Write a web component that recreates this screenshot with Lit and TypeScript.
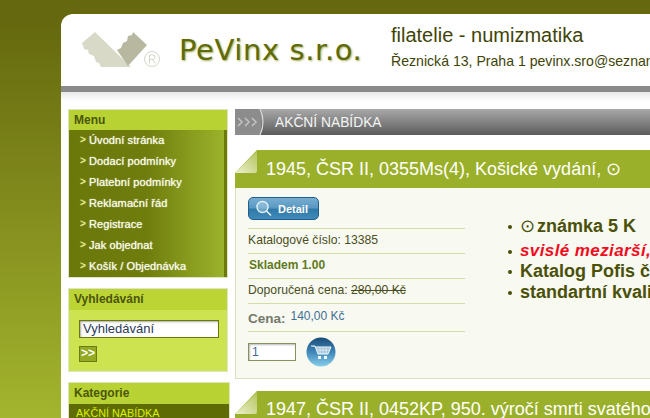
import { LitElement, html, css } from "lit";
import { customElement } from "lit/decorators.js";

const menu = ["Úvodní stránka", "Dodací podmínky", "Platební podmínky", "Reklamační řád", "Registrace", "Jak objednat", "Košík / Objednávka"];

@customElement("app-root")
export class AppRoot extends LitElement {
  static styles = css`
    :host { display: block; width: 650px; height: 418px; overflow: hidden; font-family: "Liberation Sans", Arial, sans-serif;
      background: linear-gradient(#65680e 0, #65680e 20px, #a3b52e 418px); }
    .page { margin-left: 61px; padding-top: 14px; width: 589px; overflow: hidden; box-sizing: border-box; height: 418px; }
    .wrap { background: #fff; border-top-left-radius: 12px; height: 404px; overflow: hidden; }
    .head { height: 72px; display: flex; white-space: nowrap; }
    .logo { width: 108px; height: 72px; margin-left: 14px; flex: none; }
    .brand { width: 212px; flex: none; margin-left: -4px; font: 29px/72px "DejaVu Sans", sans-serif; color: #5f6b0b; letter-spacing: .6px; text-shadow: 1px 1px 2px #a8b060; }
    .info { padding-top: 9px; color: #3f4406; }
    .info .a { font-size: 20px; line-height: 25px; }
    .info .b { font-size: 14.1px; line-height: 18px; margin-top: 4px; }
    .rule { height: 6px; background: #8a8a8a; }
    .fade { height: 9px; background: linear-gradient(#e8e8e8, #fff); }
    .cols { display: flex; margin-top: 8px; padding-left: 7px; gap: 5px; align-items: flex-start; }
    .side { width: 162px; flex: none; display: flex; flex-direction: column; gap: 10px; }
    .box { border: 1px solid #dfe3c4; width: 158px; }
    .box h3 { margin: 0; height: 20px; background: #b9d233; color: #4a560a; font-size: 12px; line-height: 20px; font-weight: bold; padding-left: 5px; }
    .menu { background: linear-gradient(90deg, #6b780a 0, #6f7d0d 50%, #9bb32b 100%); border-right: 3px solid #6d7a0a; padding: 0; margin: 0; list-style: none; height: 147px; }
    .menu li { height: 21px; line-height: 20px; font-size: 11px; letter-spacing: .1px; color: #f6f9e4; text-shadow: 0 0 1px #f6f9e4; padding-left: 11px; display: flex; gap: 6px; white-space: nowrap; }
    .menu li span { color: #e4ee70; width: 3px; font-size: 10px; }
    .search { background: #cde350; border-color: #e0e4c8; }
    .search h3 { height: 21px; line-height: 21px; background: #bdd435; }
    .sbody { background: #cde350; padding: 10px 0 10px 10px; height: 41px; }
    .sbody .inp { box-sizing: border-box; width: 140px; height: 18px; border: 1px solid #6c780e; background: #fff; box-shadow: inset 1px 1px 2px #aaa; font-size: 13px; line-height: 16px; padding-left: 3px; color: #2b3a55; }
    .go { margin-top: 8px; width: 18px; height: 16px; box-sizing: border-box; border: 1px solid #6c7c12; background: #93aa22; color: #fff; font: bold 12px/13px "Liberation Sans", sans-serif; text-align: center; }
    .cat { width: 160px; }
    .cat h3 { height: 21px; line-height: 21px; background: #b9d233; }
    .cat .on { height: 20px; background: #5f6b05; color: #d8f000; font-size: 10.8px; line-height: 19px; padding-left: 7px; }
    .main { width: 450px; flex: none; }
    .title { height: 26px; display: flex; background: linear-gradient(#a9a9a9, #5c5c5c); width: 415px; align-items: center; color: #f4f4f4; font-size: 13.8px; }
    .title svg { flex: none; margin-right: 9px; }
    .prod { width: 460px; margin-top: 15px; }
    .phead { height: 38px; background: #9bb02a; display: flex; align-items: center; white-space: nowrap; color: #fff; font-size: 18px; position: relative; padding-left: 31px; padding-bottom: 1px; box-sizing: border-box; }
    .fold { position: absolute; left: 0; top: 0; }
    .pbody { height: 191px; box-sizing: border-box; background: #f8f9f0; border: 1px solid #dcdfc0; border-top: 0; display: flex; }
    .left { width: 217px; margin-left: 12px; flex: none; font-size: 12.2px; color: #4a4e22; }
    .detail { margin-top: 9px; width: 71px; height: 23px; box-sizing: border-box; border: 1px solid #1f5f8f; border-radius: 5px; background: linear-gradient(#78aed2 0, #5a99c2 45%, #2f7aa8 55%, #3f8ab8 100%); display: flex; align-items: center; gap: 5px; padding-left: 6px; color: #fff; font-size: 11px; font-weight: bold; }
    .row { border-top: 1px solid #d6dbaa; height: 24px; line-height: 23px; white-space: nowrap; }
    .row.first { margin-top: 8px; }
    .row.stock { color: #5f7a1c; font-weight: bold; font-size: 12px; padding-left: 1px; height: 24px; }
    .row s { color: #4a4e22; }
    .row.price { height: 27px; line-height: 27px; display: flex; gap: 5px; }
    .row.price b { color: #73796b; font-size: 13.5px; padding-top: 1px; }
    .row.price span { color: #3f6f96; font-size: 12px; line-height: 25px; }
    .buy { border-top: 1px solid #d6dbaa; display: flex; align-items: center; gap: 10px; padding-top: 5px; }
    .qty { width: 48px; height: 18px; box-sizing: border-box; border: 1px solid #8a8f5e; background: #fff; box-shadow: inset 1px 1px 2px #bbb; font-size: 12px; line-height: 16px; padding-left: 3px; color: #3a6a9a; }
    .list { margin: 28px 0 0 43px; padding: 0 0 0 12px; list-style: none; white-space: nowrap; font-size: 18px; font-weight: bold; color: #4a5008; line-height: 20.5px; }
    .list li { position: relative; }
    .list li::before { content: ""; position: absolute; left: -12px; top: 9px; width: 4px; height: 4px; border-radius: 50%; background: #4a5008; }
    .list .r { color: #f00c1e; font-style: italic; font-size: 17px; letter-spacing: .4px; margin-top: 4px; }
    .list .s { display: inline-block; font-weight: normal; margin-right: 2px; }
    .next { margin-top: 12px; }
  `;

  private fold() {
    return html`<svg class="fold" width="23" height="24" viewBox="0 0 23 24">
      <defs><linearGradient id="fg" x1="0" y1="1" x2="1" y2="0"><stop offset="0" stop-color="#eef0cf"/><stop offset="1" stop-color="#b3c55a"/></linearGradient></defs>
      <path d="M0 0H22L0 23Z" fill="#fff"/><path d="M0 23L22 1V21Q22 23 20 23Z" fill="url(#fg)"/></svg>`;
  }

  render() {
    return html`<div class="page"><div class="wrap">
      <div class="head">
        <svg class="logo" viewBox="0 0 108 72">
          <path d="M20 18L56 53H26L24 49L21 48L19 42L14 40L13 36L9 35L7 29Z" fill="#d8d9c7"/>
          <path d="M58 18L72 31L53 52L42 36L46 34L48 29L52 27L53 22L57 21Z" fill="#b8b8a0"/>
          <circle cx="77" cy="45" r="7.5" fill="none" stroke="#d6d6ca" stroke-width="1"/>
          <path d="M74.5 49.5V41H78Q80 41 80 43.2T78 45.4H74.5M77.5 45.4L80.5 49.5" fill="none" stroke="#d4d4c8" stroke-width="1"/>
        </svg>
        <div class="brand">PeVinx s.r.o.</div>
        <div class="info"><div class="a">filatelie - numizmatika</div><div class="b">Řeznická 13, Praha 1 pevinx.sro@seznam.cz</div></div>
      </div>
      <div class="rule"></div><div class="fade"></div>
      <div class="cols">
        <div class="side">
          <div class="box"><h3>Menu</h3><ul class="menu">${menu.map((m) => html`<li><span>&gt;</span>${m}</li>`)}</ul></div>
          <div class="box search"><h3>Vyhledávání</h3><div class="sbody"><div class="inp">Vyhledávání</div><div class="go">&gt;&gt;</div></div></div>
          <div class="box cat"><h3>Kategorie</h3><div class="on">AKČNÍ NABÍDKA</div></div>
        </div>
        <div class="main">
          <div class="title">
            <svg width="31" height="26" viewBox="0 0 31 26"><rect width="26" height="26" fill="#8c8c8c"/>
              <path d="M3 9L7 13L3 17M10 9L14 13L10 17M17 9L21 13L17 17" fill="none" stroke="#c4c4c4" stroke-width="1.5"/>
              <path d="M25 0Q31 13 25 26" fill="none" stroke="#d8d8d8" stroke-width="1.2"/></svg>
            AKČNÍ NABÍDKA
          </div>
          <div class="prod">
            <div class="phead">${this.fold()}1945, ČSR II, 0355Ms(4), Košické vydání, ⊙</div>
            <div class="pbody">
              <div class="left">
                <div class="detail">
                  <svg width="18" height="18" viewBox="0 0 18 18"><circle cx="7.5" cy="7" r="5.5" fill="#a9cfe6" fill-opacity=".5" stroke="#e4f0f8" stroke-width="1.4"/><path d="M11.5 11L16 15.5" stroke="#e8f2f8" stroke-width="1.6"/></svg>
                  Detail
                </div>
                <div class="row first">Katalogové číslo: 13385</div>
                <div class="row stock">Skladem 1.00</div>
                <div class="row">Doporučená cena: <s>280,00 Kč</s></div>
                <div class="row price"><b>Cena:</b><span>140,00 Kč</span></div>
                <div class="buy">
                  <div class="qty">1</div>
                  <svg width="30" height="30" viewBox="0 0 30 30">
                    <defs><linearGradient id="cg" x1="0" y1="0" x2="0" y2="1"><stop offset="0" stop-color="#1a4c78"/><stop offset=".5" stop-color="#3f86b8"/><stop offset="1" stop-color="#86cfec"/></linearGradient></defs>
                    <circle cx="15" cy="15" r="14.5" fill="url(#cg)"/>
                    <path d="M5 9H9L12 17H22L25 10H10" fill="#e6f2f8" fill-opacity=".6" stroke="#f4fafc" stroke-width="1"/>
                    <path d="M14 10.5V17M17 10.5V17M20 10.5V17M11 13H23.5" stroke="#f4fafc" stroke-width=".6"/>
                    <rect x="12" y="19" width="3" height="3" fill="#f4fafc"/><rect x="18" y="19" width="3" height="3" fill="#f4fafc"/>
                  </svg>
                </div>
              </div>
              <ul class="list">
                <li><span class="s">⊙</span>známka 5 K</li>
                <li class="r">svislé meziarší, hledané</li>
                <li>Katalog Pofis č. 355Ms</li>
                <li>standartní kvalita</li>
              </ul>
            </div>
            <div class="phead next">${this.fold()}1947, ČSR II, 0452KP, 950. výročí smrti svatého Vojtěcha</div>
          </div>
        </div>
      </div>
    </div></div>`;
  }
}
